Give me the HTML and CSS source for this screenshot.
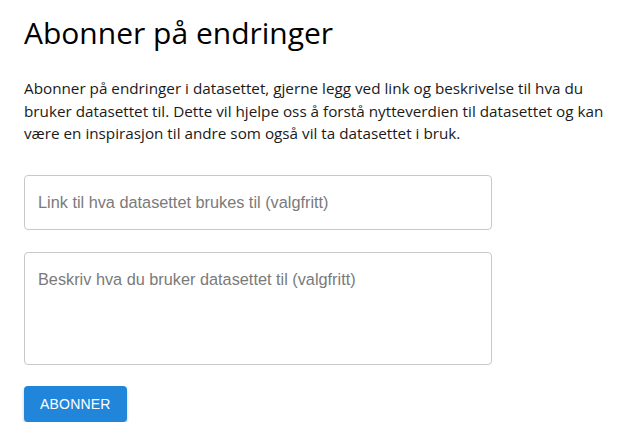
FILE: index.html
```html
<!DOCTYPE html>
<html lang="no">
<head>
<meta charset="utf-8">
<title>Abonner på endringer</title>
<link rel="stylesheet" href="styles.css">
</head>
<body>
<main class="page">
  <h1 class="title">Abonner på endringer</h1>
  <p class="intro">Abonner på endringer i datasettet, gjerne legg ved link og beskrivelse til hva du bruker datasettet til. Dette vil hjelpe oss å forstå nytteverdien til datasettet og kan være en inspirasjon til andre som også vil ta datasettet i bruk.</p>
  <form class="form">
    <input class="field field-input" type="text" placeholder="Link til hva datasettet brukes til (valgfritt)">
    <textarea class="field field-area" placeholder="Beskriv hva du bruker datasettet til (valgfritt)"></textarea>
    <div class="actions"><button class="btn" type="button">Abonner</button></div>
  </form>
</main>
</body>
</html>
```

FILE: styles.css
```css
html, body {
  margin: 0;
  padding: 0;
  background: #fff;
}
.page {
  padding: 11px 24px 0 24px;
  width: 590px;
  font-family: "Open Sans", "Noto Sans", sans-serif;
  color: #111;
}
.title {
  margin: 0;
  font-weight: 400;
  font-size: 30px;
  line-height: 44px;
  color: #000;
}
.intro {
  margin: 22px 0 0 0;
  font-size: 15.25px;
  line-height: 22.5px;
  color: #1a1a1a;
}
.form {
  margin-top: 30px;
  width: 468px;
  display: flex;
  flex-direction: column;
}
.field {
  box-sizing: border-box;
  width: 468px;
  border: 1px solid #c8c8c8;
  border-radius: 4px;
  font-family: "Liberation Sans", Arial, sans-serif;
  font-size: 16.3px;
  color: #222;
  padding: 0 13px;
  outline: none;
  background: #fff;
}
.field::placeholder {
  color: #7a7a7a;
  opacity: 1;
}
.field-input {
  height: 55px;
}
.field-area {
  margin-top: 22px;
  height: 113px;
  padding-top: 17px;
  resize: none;
}
.actions {
  margin-top: 21px;
}
.btn {
  height: 36px;
  padding: 0 16px;
  border: none;
  border-radius: 4px;
  background: #2185d9;
  color: #fff;
  font-family: "Liberation Sans", Arial, sans-serif;
  font-size: 14px;
  text-transform: uppercase;
  letter-spacing: 0.2px;
  box-shadow: 0 2px 3px rgba(0,0,0,0.25);
  cursor: pointer;
}
```
